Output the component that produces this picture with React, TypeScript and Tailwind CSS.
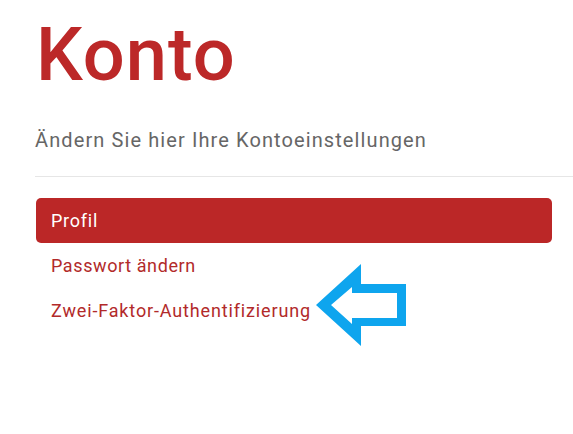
export default function App() {
  return (
    <div className="min-h-[434px] w-[573px] overflow-hidden bg-white font-['Roboto',sans-serif]">
      <div className="pl-[35px]">
        <h1 className="pt-[11px] pl-[1px] text-[74px] font-medium leading-[88px] tracking-[1px] text-[#bc2828]">Konto</h1>
        <p className="mt-[27px] text-[20px] leading-[28px] tracking-[1.1px] text-[#666666]">Ändern Sie hier Ihre Kontoeinstellungen</p>
        <div className="mt-[22px] h-px bg-[#e6e6e6]" />
        <nav className="mt-[21px] flex w-[517px] flex-col pl-[1px] text-[18px]">
          <a className="flex h-[45px] items-center rounded-[5px] bg-[#bb2727] px-[15px] tracking-[0.75px] text-white">Profil</a>
          <a className="flex h-[45px] items-center px-[15px] tracking-[0.6px] text-[#b22a2a]">Passwort ändern</a>
          <div className="flex h-[44px] items-center">
            <a className="pl-[15px] tracking-[0.85px] text-[#b22a2a]">Zwei-Faktor-Authentifizierung</a>
            <svg width="92" height="84" viewBox="316 265 92 84" className="ml-[5px] -mt-[10px]">
              <path
                fillRule="evenodd"
                fill="#0ea5ee"
                d="M316 307 L361 266 L361 286 L406 286 L406 328 L361 328 L361 348 Z M331 307 L352 289 L352 295 L397 295 L397 320 L352 320 L352 326 Z"
              />
            </svg>
          </div>
        </nav>
      </div>
    </div>
  );
}
